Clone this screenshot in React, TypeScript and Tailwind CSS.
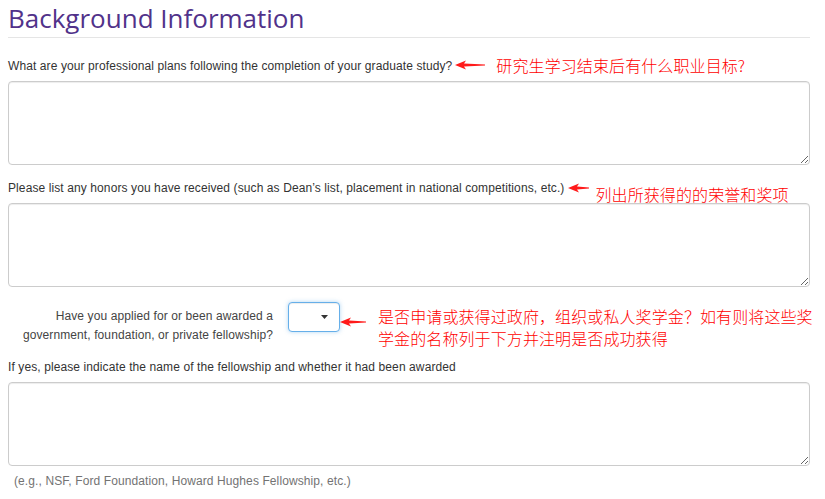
import React from 'react'

const Arrow = ({ w }: { w: number }) => (
  <svg width={w} height={10} viewBox={`0 0 ${w} 10`} className="shrink-0">
    <polygon points={`0,5 11,0.5 9,3.6 ${w},4.6 ${w},5.4 9,6.4 11,9.5`} fill="#ff1a1a" />
  </svg>
)

const Note = ({ children, className = '' }: { children: React.ReactNode; className?: string }) => (
  <span
    className={`shrink-0 text-[16px] font-light text-[#ff0000] font-['Noto_Sans_CJK_SC',sans-serif] ${className}`}
  >
    {children}
  </span>
)

const Area = () => (
  <textarea className="block w-full h-[84px] rounded-[4px] border border-[#cccccc] shadow-[inset_0_1px_1px_rgba(0,0,0,0.075)] bg-white outline-none" />
)

export default function App() {
  return (
    <div className="min-h-screen bg-white">
      <div className="ml-2 w-[802px] font-['Liberation_Sans',Arial,sans-serif] text-[12px] tracking-[0.1px] text-[#333333]">
        <h2 className="font-['Open_Sans',sans-serif] text-[26px] leading-[37px] tracking-normal text-[#51328a] border-b border-[#e5e5e5]">
          Background Information
        </h2>

        {/* professional plans */}
        <div className="mt-[18px] flex items-start h-5 whitespace-nowrap">
          <span className="leading-5">
            What are your professional plans following the completion of your graduate study?
          </span>
          <span className="ml-[3px] mt-[4px]">
            <Arrow w={30} />
          </span>
          <Note className="ml-[11px] leading-[18px]">研究生学习结束后有什么职业目标?</Note>
        </div>
        <div className="mt-[5px]">
          <Area />
        </div>

        {/* honors */}
        <div className="mt-[13px] flex items-start h-5 whitespace-nowrap">
          <span className="leading-5">
            Please list any honors you have received (such as Dean’s list, placement in national competitions, etc.)
          </span>
          <span className="ml-[4px] mt-[5px]">
            <Arrow w={21} />
          </span>
          <Note className="ml-[6px] mt-[6px] leading-5">列出所获得的的荣誉和奖项</Note>
        </div>
        <div className="mt-[5px]">
          <Area />
        </div>

        {/* fellowship select */}
        <div className="mt-[15px] flex items-start">
          <label className="shrink-0 w-[265px] text-right pt-[5px] leading-[19px] text-[#444]">
            Have you applied for or been awarded a
            <br />
            government, foundation, or private fellowship?
          </label>
          <div className="shrink-0 ml-[15px] w-[52px] h-[30px] rounded-[4px] border border-[#66afe9] shadow-[inset_0_1px_1px_rgba(0,0,0,0.075),0_0_4px_rgba(102,175,233,0.5)] bg-white flex items-center justify-end pr-[11px]">
            <svg width="7" height="4" viewBox="0 0 7 4">
              <polygon points="0,0 7,0 3.5,4" fill="#333" />
            </svg>
          </div>
          <span className="mt-[15px]">
            <Arrow w={26} />
          </span>
          <Note className="ml-[12px] mt-[3px] leading-[22px] w-[440px]">
            是否申请或获得过政府，组织或私人奖学金？如有则将这些奖
            <br />
            学金的名称列于下方并注明是否成功获得
          </Note>
        </div>

        {/* fellowship details */}
        <div className="mt-[8px] leading-5">
          If yes, please indicate the name of the fellowship and whether it had been awarded
        </div>
        <div className="mt-[5px]">
          <Area />
        </div>
        <p className="mt-[7px] pl-[6px] leading-4 text-[#737373]">
          (e.g., NSF, Ford Foundation, Howard Hughes Fellowship, etc.)
        </p>
      </div>
    </div>
  )
}
